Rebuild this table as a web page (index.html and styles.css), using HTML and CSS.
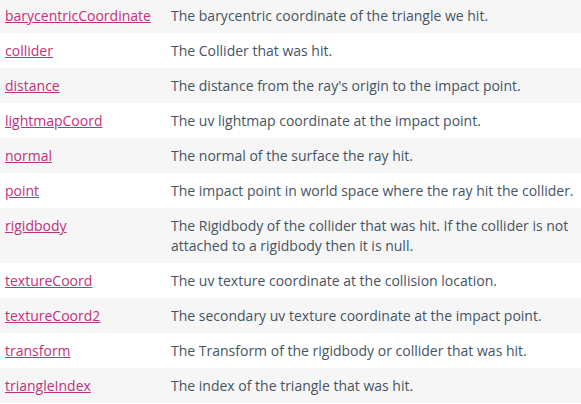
FILE: index.html
```html
<!DOCTYPE html>
<html>
<head>
<meta charset="utf-8">
<link rel="stylesheet" href="styles.css">
</head>
<body>
<table class="props">
<tr><td class="name"><a href="#">barycentricCoordinate</a></td><td class="desc">The barycentric coordinate of the triangle we hit.</td></tr>
<tr><td class="name"><a href="#">collider</a></td><td class="desc">The Collider that was hit.</td></tr>
<tr><td class="name"><a href="#">distance</a></td><td class="desc">The distance from the ray's origin to the impact point.</td></tr>
<tr><td class="name"><a href="#">lightmapCoord</a></td><td class="desc">The uv lightmap coordinate at the impact point.</td></tr>
<tr><td class="name"><a href="#">normal</a></td><td class="desc">The normal of the surface the ray hit.</td></tr>
<tr><td class="name"><a href="#">point</a></td><td class="desc">The impact point in world space where the ray hit the collider.</td></tr>
<tr><td class="name"><a href="#">rigidbody</a></td><td class="desc">The Rigidbody of the collider that was hit. If the collider is not attached to a rigidbody then it is null.</td></tr>
<tr><td class="name"><a href="#">textureCoord</a></td><td class="desc">The uv texture coordinate at the collision location.</td></tr>
<tr><td class="name"><a href="#">textureCoord2</a></td><td class="desc">The secondary uv texture coordinate at the impact point.</td></tr>
<tr><td class="name"><a href="#">transform</a></td><td class="desc">The Transform of the rigidbody or collider that was hit.</td></tr>
<tr><td class="name"><a href="#">triangleIndex</a></td><td class="desc">The index of the triangle that was hit.</td></tr>
</table>
</body>
</html>
```
FILE: styles.css
```css
html, body {
  margin: 0;
  padding: 0;
  background: #ffffff;
}
body {
  font-family: "Open Sans", "Liberation Sans", sans-serif;
  font-size: 14px;
  line-height: 20px;
  color: #455463;
}
.props {
  width: 581px;
  border-collapse: collapse;
  border-spacing: 0;
  margin-top: -2px;
}
.props tr:nth-child(odd) {
  background: #f6f6f6;
}
.props td {
  padding: 8px 5px 7px 5px;
  vertical-align: top;
}
.props td.name {
  width: 156px;
}
.props td.desc {
  padding-right: 4px;
}
.props a {
  color: #c2317c;
  text-decoration: underline;
}
```
